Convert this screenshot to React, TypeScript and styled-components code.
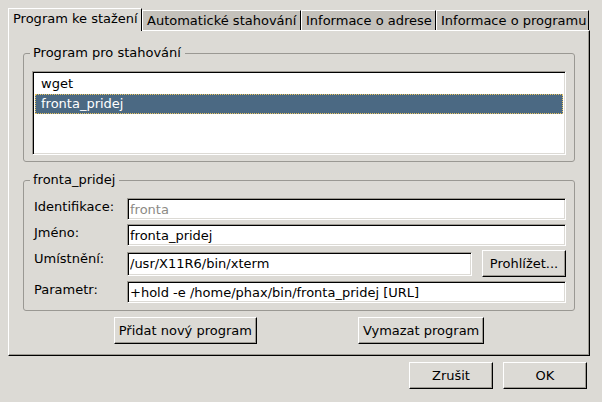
import React from "react";
import styled, { createGlobalStyle } from "styled-components";

const GlobalStyle = createGlobalStyle`
  * {
    box-sizing: border-box;
  }
  html,
  body {
    margin: 0;
    padding: 0;
    background: #dcdad5;
  }
  body {
    font-family: "DejaVu Sans", "Liberation Sans", sans-serif;
    font-size: 13px;
    color: #000;
  }
`;

const tabs = [
  { label: "Program ke stažení", width: 134 },
  { label: "Automatické stahování", width: 159 },
  { label: "Informace o adrese", width: 135 },
  { label: "Informace o programu", width: 153 },
];

const fields = [
  { label: "Identifikace:", value: "fronta", disabled: true },
  { label: "Jméno:", value: "fronta_pridej" },
  { label: "Umístnění:", value: "/usr/X11R6/bin/xterm", browse: true },
  { label: "Parametr:", value: "+hold -e /home/phax/bin/fronta_pridej [URL]" },
];

const App = () => {
  return (
    <Dialog>
      <GlobalStyle />
      <TabBar>
        {tabs.map((t, i) => (
          <Tab key={t.label} $active={i === 0} $width={t.width}>
            {t.label}
          </Tab>
        ))}
      </TabBar>
      <Panel>
        <GroupBox>
          <Legend>Program pro stahování</Legend>
          <ListBox>
            <ListRow>wget</ListRow>
            <ListRow $selected>fronta_pridej</ListRow>
          </ListBox>
        </GroupBox>
        <GroupBox $bottom={7} $gap={10}>
          <Legend>fronta_pridej</Legend>
          <Form>
            {fields.map((f) => (
              <React.Fragment key={f.label}>
                <Label>{f.label}</Label>
                {f.browse ? (
                  <FieldLine>
                    <Entry $tall readOnly defaultValue={f.value} />
                    <Button $width={84}>Prohlížet...</Button>
                  </FieldLine>
                ) : (
                  <Entry
                    readOnly
                    $disabled={f.disabled}
                    defaultValue={f.value}
                  />
                )}
              </React.Fragment>
            ))}
          </Form>
        </GroupBox>
        <ActionRow>
          <Button>Přidat nový program</Button>
          <Button>Vymazat program</Button>
        </ActionRow>
      </Panel>
      <Footer>
        <Button $width={84}>Zrušit</Button>
        <Button $width={84}>OK</Button>
      </Footer>
    </Dialog>
  );
};

const Dialog = styled.div`
  width: 602px;
  height: 402px;
  padding: 8px 12px 0 8px;
  display: flex;
  flex-direction: column;
  background: #dcdad5;
`;

const TabBar = styled.div`
  display: flex;
  align-items: flex-end;
  height: 22px;
`;

const Tab = styled.div<{ $active?: boolean; $width: number }>`
  position: relative;
  z-index: ${(p) => (p.$active ? 1 : 0)};
  width: ${(p) => p.$width}px;
  height: ${(p) => (p.$active ? 23 : 20)}px;
  margin-bottom: ${(p) => (p.$active ? -1 : 0)}px;
  padding-left: 4px;
  line-height: ${(p) => (p.$active ? 20 : 19)}px;
  white-space: nowrap;
  overflow: hidden;
  background: ${(p) => (p.$active ? "#dcdad5" : "#c4c1bb")};
  border-top: 1px solid #fff;
  border-left: 1px solid #fff;
  border-right: 1px solid #000;
`;

const Panel = styled.div`
  display: flex;
  flex-direction: column;
  padding: 14px 14px 11px;
  border: 1px solid;
  border-color: #fff #000 #000 #fff;
  box-shadow: inset -1px -1px 0 #9d9a93;
`;

const GroupBox = styled.fieldset<{ $bottom?: number; $gap?: number }>`
  margin: 0 0 ${(p) => p.$gap ?? 10}px;
  padding: 10px 8px ${(p) => p.$bottom ?? 6}px;
  min-width: 0;
  border: 1px solid #9a9893;
  border-radius: 3px;
  &:last-of-type {
    margin-bottom: 6px;
  }
`;

const Legend = styled.legend`
  margin-left: -2px;
  padding: 0 4px 0 3px;
  line-height: 16px;
`;

const sunken = `
  border: 1px solid;
  border-color: #9d9a93 #fff #fff #9d9a93;
  box-shadow: inset 1px 1px 0 #000, inset -1px -1px 0 #dcdad5;
  background: #fff;
`;

const ListBox = styled.div`
  ${sunken}
  height: 84px;
  padding: 2px;
`;

const ListRow = styled.div<{ $selected?: boolean }>`
  height: 20px;
  line-height: 20px;
  padding-left: 6px;
  background: ${(p) => (p.$selected ? "#4b6983" : "transparent")};
  color: ${(p) => (p.$selected ? "#fff" : "#000")};
  outline: ${(p) => (p.$selected ? "1px dotted #e8c45e" : "none")};
  outline-offset: -1px;
`;

const Form = styled.div`
  display: grid;
  grid-template-columns: 95px 1fr;
  row-gap: 4px;
  align-items: center;
`;

const Label = styled.div`
  align-self: start;
  padding: 1px 0 0 2px;
  line-height: 16px;
  white-space: nowrap;
`;

const FieldLine = styled.div`
  display: flex;
  align-items: center;
  gap: 10px;
`;

const Entry = styled.input<{ $disabled?: boolean; $tall?: boolean }>`
  ${sunken}
  display: block;
  width: 100%;
  min-width: 0;
  flex: 1;
  height: ${(p) => (p.$tall ? 24 : 22)}px;
  padding: 0 2px;
  margin: 0;
  font: inherit;
  color: ${(p) => (p.$disabled ? "#8c8a85" : "#000")};
  outline: none;
`;

const Button = styled.button<{ $width?: number }>`
  height: 27px;
  width: ${(p) => (p.$width ? `${p.$width}px` : "auto")};
  flex: none;
  padding: 0 4px;
  margin: 0;
  font: inherit;
  color: #000;
  white-space: nowrap;
  background: #dcdad5;
  border: 1px solid;
  border-color: #fff #000 #000 #fff;
  border-radius: 0;
  box-shadow: inset -1px -1px 0 #9d9a93;
`;

const ActionRow = styled.div`
  display: flex;
  justify-content: center;
  gap: 101px;
`;

const Footer = styled.div`
  display: flex;
  justify-content: flex-end;
  gap: 10px;
  margin-top: 6px;
  padding-right: 3px;
`;

export default App;
